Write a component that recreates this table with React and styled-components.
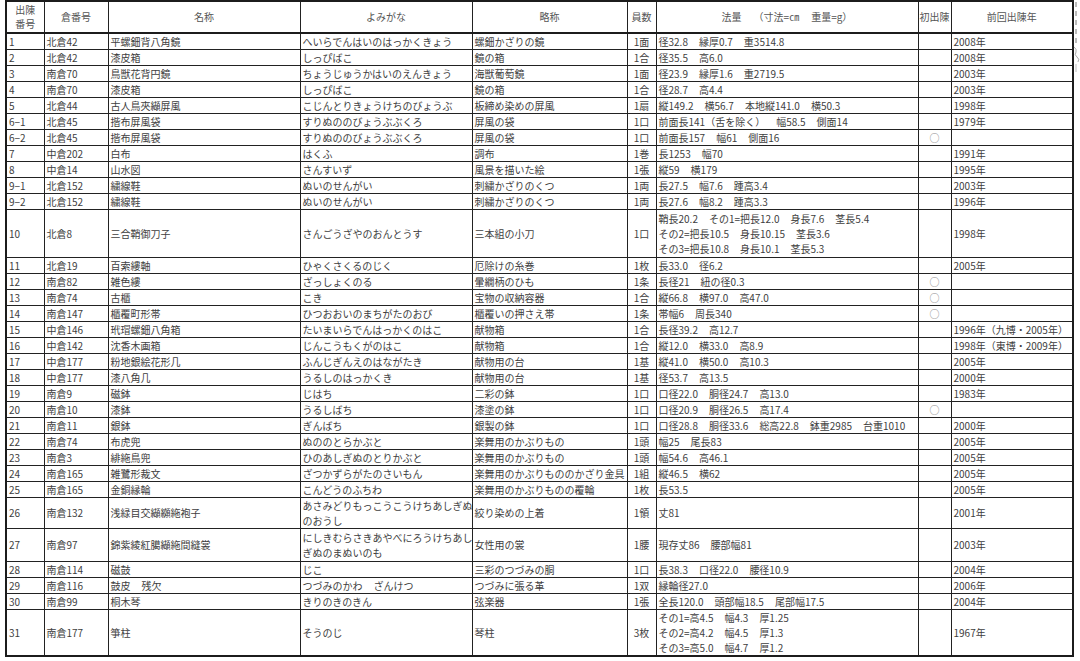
import React from 'react';
import styled, { createGlobalStyle } from 'styled-components';

const GlobalStyle = createGlobalStyle`
  html, body { margin: 0; padding: 0; background: #fff; }
  body { font-family: "Noto Sans CJK JP", "Noto Sans", sans-serif; }
`;

const Page = styled.div`
  position: relative;
  width: 1080px;
  height: 661px;
  overflow: hidden;
  box-sizing: border-box;
  padding: 0 0 0 5px;
  background: #fff;
`;

const Table = styled.table`
  border-collapse: collapse;
  table-layout: fixed;
  width: 1068px;
  font-size: 10px;
  color: #3e3e3e;
  border: 2px solid #1c1c1c;
`;

const Col = styled.col`
  width: ${(p) => p.$w}px;
`;

const HeadRow = styled.tr`
  height: 32px;
`;

const HeadCell = styled.th`
  font-weight: normal;
  color: #555;
  text-align: center;
  vertical-align: middle;
  border: 1px solid #222;
  border-bottom: 2px solid #1c1c1c;
  padding: 0;
  line-height: 14px;
  white-space: nowrap;
  overflow: hidden;
`;

const Row = styled.tr`
  height: ${(p) => p.$h}px;
`;

const Cell = styled.td`
  border: 1px solid #222;
  padding: 0 2px;
  text-align: ${(p) => p.$align || 'left'};
  vertical-align: middle;
  white-space: nowrap;
  overflow: hidden;
  line-height: ${(p) => (p.$multi ? 15 : 13)}px;
`;

const Line = styled.div`
  display: block;
`;

const Gap = styled.span`
  display: inline-block;
  width: ${(p) => p.$w || 11}px;
`;

const Circle = styled.span`
  color: #888;
  font-size: 10px;
`;

const Edge = styled.svg`
  position: absolute;
  top: 0;
  right: 0;
  width: 8px;
  height: 80px;
`;

const cols = [38, 64, 192, 172, 155, 29, 262, 33, 122];

const rows = [
  ['1', '北倉42', '平螺鈿背八角鏡', 'へいらでんはいのはっかくきょう', '螺鈿かざりの鏡', '1面', '径32.8　縁厚0.7　重3514.8', '', '2008年'],
  ['2', '北倉42', '漆皮箱', 'しっぴばこ', '鏡の箱', '1合', '径35.5　高6.0', '', '2008年'],
  ['3', '南倉70', '鳥獣花背円鏡', 'ちょうじゅうかはいのえんきょう', '海獣葡萄鏡', '1面', '径23.9　縁厚1.6　重2719.5', '', '2003年'],
  ['4', '南倉70', '漆皮箱', 'しっぴばこ', '鏡の箱', '1合', '径28.7　高4.4', '', '2003年'],
  ['5', '北倉44', '古人鳥夾纈屏風', 'こじんとりきょうけちのびょうぶ', '板締め染めの屏風', '1扇', '縦149.2　横56.7　本地縦141.0　横50.3', '', '1998年'],
  ['6−1', '北倉45', '揩布屏風袋', 'すりぬののびょうぶぶくろ', '屏風の袋', '1口', '前面長141（舌を除く）　幅58.5　側面14', '', '1979年'],
  ['6−2', '北倉45', '揩布屏風袋', 'すりぬののびょうぶぶくろ', '屏風の袋', '1口', '前面長157　幅61　側面16', '○', ''],
  ['7', '中倉202', '白布', 'はくふ', '調布', '1巻', '長1253　幅70', '', '1991年'],
  ['8', '中倉14', '山水図', 'さんすいず', '風景を描いた絵', '1張', '縦59　横179', '', '1995年'],
  ['9−1', '北倉152', '繍線鞋', 'ぬいのせんがい', '刺繍かざりのくつ', '1両', '長27.5　幅7.6　踵高3.4', '', '2003年'],
  ['9−2', '北倉152', '繍線鞋', 'ぬいのせんがい', '刺繍かざりのくつ', '1両', '長27.6　幅8.2　踵高3.3', '', '1996年'],
  ['10', '北倉8', '三合鞘御刀子', 'さんごうざやのおんとうす', '三本組の小刀', '1口', '鞘長20.2　その1=把長12.0　身長7.6　茎長5.4\nその2=把長10.5　身長10.15　茎長3.6\nその3=把長10.8　身長10.1　茎長5.3', '', '1998年', 48],
  ['11', '北倉19', '百索縷軸', 'ひゃくさくるのじく', '厄除けの糸巻', '1枚', '長33.0　径6.2', '', '2005年'],
  ['12', '南倉82', '雑色縷', 'ざっしょくのる', '暈繝柄のひも', '1条', '長径21　紐の径0.3', '○', ''],
  ['13', '南倉74', '古櫃', 'こき', '宝物の収納容器', '1合', '縦66.8　横97.0　高47.0', '○', ''],
  ['14', '南倉147', '櫃覆町形帯', 'ひつおおいのまちがたのおび', '櫃覆いの押さえ帯', '1条', '帯幅6　周長340', '○', ''],
  ['15', '中倉146', '玳瑁螺鈿八角箱', 'たいまいらでんはっかくのはこ', '献物箱', '1合', '長径39.2　高12.7', '', '1996年（九博・2005年）'],
  ['16', '中倉142', '沈香木画箱', 'じんこうもくがのはこ', '献物箱', '1合', '縦12.0　横33.0　高8.9', '', '1998年（東博・2009年）'],
  ['17', '中倉177', '粉地銀絵花形几', 'ふんじぎんえのはながたき', '献物用の台', '1基', '縦41.0　横50.0　高10.3', '', '2005年'],
  ['18', '中倉177', '漆八角几', 'うるしのはっかくき', '献物用の台', '1基', '径53.7　高13.5', '', '2000年'],
  ['19', '南倉9', '磁鉢', 'じはち', '二彩の鉢', '1口', '口径22.0　胴径24.7　高13.0', '', '1983年'],
  ['20', '南倉10', '漆鉢', 'うるしばち', '漆塗の鉢', '1口', '口径20.9　胴径26.5　高17.4', '○', ''],
  ['21', '南倉11', '銀鉢', 'ぎんばち', '銀製の鉢', '1口', '口径28.8　胴径33.6　総高22.8　鉢重2985　台重1010', '', '2000年'],
  ['22', '南倉74', '布虎兜', 'ぬののとらかぶと', '楽舞用のかぶりもの', '1頭', '幅25　尾長83', '', '2005年'],
  ['23', '南倉3', '緋絁鳥兜', 'ひのあしぎぬのとりかぶと', '楽舞用のかぶりもの', '1頭', '幅54.6　高46.1', '', '2005年'],
  ['24', '南倉165', '雑鷺形裁文', 'ざつかずらがたのさいもん', '楽舞用のかぶりもののかざり金具', '1組', '縦46.5　横62', '', '2005年'],
  ['25', '南倉165', '金銅縁輪', 'こんどうのふちわ', '楽舞用のかぶりものの覆輪', '1枚', '長53.5', '', '2005年'],
  ['26', '南倉132', '浅緑目交纈纐絁袍子', 'あさみどりもっこうこうけちあしぎぬ\nのおうし', '絞り染めの上着', '1領', '丈81', '', '2001年', 31],
  ['27', '南倉97', '錦紫綾紅臈纈絁間縫裳', 'にしきむらさきあやべにろうけちあし\nぎぬのまぬいのも', '女性用の裳', '1腰', '現存丈86　腰部幅81', '', '2003年', 33],
  ['28', '南倉114', '磁鼓', 'じこ', '三彩のつづみの胴', '1口', '長38.3　口径22.0　腰径10.9', '', '2004年'],
  ['29', '南倉116', '鼓皮　残欠', 'つづみのかわ　ざんけつ', 'つづみに張る革', '1双', '縁輪径27.0', '', '2006年'],
  ['30', '南倉99', '桐木琴', 'きりのきのきん', '弦楽器', '1張', '全長120.0　頭部幅18.5　尾部幅17.5', '', '2004年'],
  ['31', '南倉177', '箏柱', 'そうのじ', '琴柱', '3枚', 'その1=高4.5　幅4.3　厚1.25\nその2=高4.2　幅4.5　厚1.3\nその3=高5.0　幅4.7　厚1.2', '', '1967年', 47],
];

const Spaced = ({ text, gap }) => {
  const parts = text.split('　');
  return parts.map((p, i) => (
    <React.Fragment key={i}>
      {i > 0 && <Gap $w={gap} />}
      {p}
    </React.Fragment>
  ));
};

const Content = ({ text }) => {
  const lines = text.split('\n');
  if (lines.length === 1) return <Spaced text={text} />;
  return lines.map((l, i) => (
    <Line key={i}>
      <Spaced text={l} />
    </Line>
  ));
};

const aligns = ['left', 'left', 'left', 'left', 'left', 'center', 'left', 'center', 'left'];

export default function App() {
  return (
    <>
      <GlobalStyle />
      <Page>
        <Table>
          <colgroup>
            {cols.map((w, i) => (
              <Col key={i} $w={w} />
            ))}
          </colgroup>
          <thead>
            <HeadRow>
              <HeadCell>
                <Line>出陳</Line>
                <Line>番号</Line>
              </HeadCell>
              <HeadCell>倉番号</HeadCell>
              <HeadCell>名称</HeadCell>
              <HeadCell>よみがな</HeadCell>
              <HeadCell>略称</HeadCell>
              <HeadCell>員数</HeadCell>
              <HeadCell>
                <Spaced text="法量　（寸法=㎝　重量=g）" gap={12} />
              </HeadCell>
              <HeadCell>初出陳</HeadCell>
              <HeadCell>前回出陳年</HeadCell>
            </HeadRow>
          </thead>
          <tbody>
            {rows.map((r) => {
              const h = r[9] || 16;
              return (
                <Row key={r[0]} $h={h}>
                  {r.slice(0, 9).map((c, i) => (
                    <Cell key={i} $align={aligns[i]} $multi={c.includes('\n')}>
                      {c === '○' ? <Circle>○</Circle> : <Content text={c} />}
                    </Cell>
                  ))}
                </Row>
              );
            })}
          </tbody>
        </Table>
        <Edge viewBox="0 0 8 80">
          <line x1="4" y1="2" x2="4" y2="44" stroke="#777" strokeWidth="1" strokeDasharray="5 4" />
          <path d="M2 47 q3 2 2 5 q-2 3 1 5 q3 2 1 5" fill="none" stroke="#aaa" strokeWidth="1" />
          <line x1="4" y1="64" x2="4" y2="72" stroke="#bbb" strokeWidth="1" />
        </Edge>
      </Page>
    </>
  );
}
